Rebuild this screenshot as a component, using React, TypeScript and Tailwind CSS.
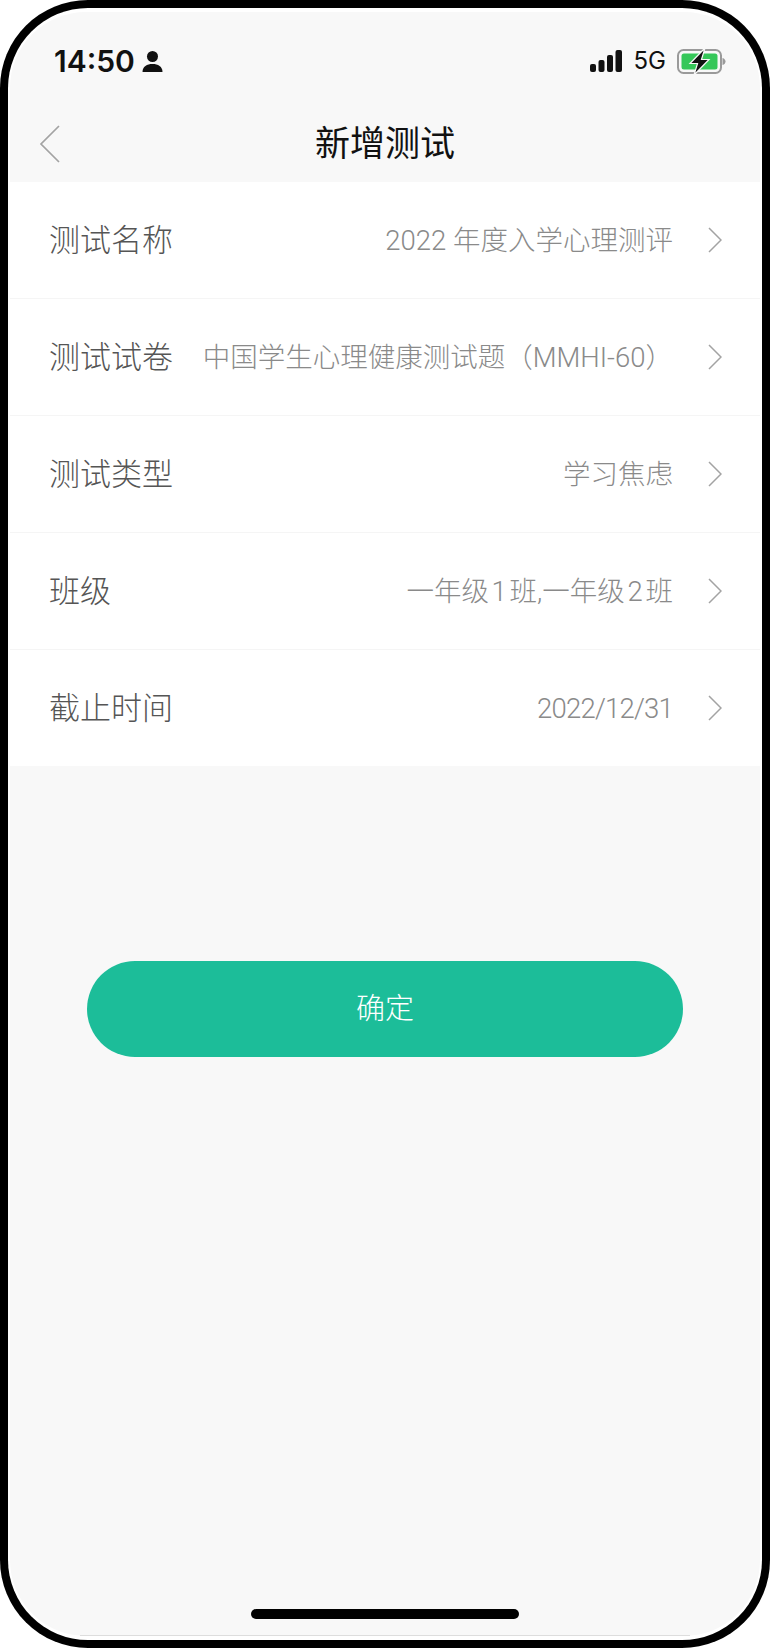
const CJK = "font-['Roboto','Noto_Sans_CJK_SC',sans-serif]";

const ROWS = [
  { label: "测试名称", value: "2022 年度入学心理测评", tweak: "" },
  { label: "测试试卷", value: "中国学生心理健康测试题（MMHI-60）", tweak: "" },
  { label: "测试类型", value: "学习焦虑", tweak: "" },
  { label: "班级", value: "一年级 1 班,一年级 2 班", tweak: "[word-spacing:-4px]" },
  { label: "截止时间", value: "2022/12/31", tweak: "tracking-[-0.8px]" },
];

function Chevron() {
  return (
    <svg width="16" height="26" viewBox="0 0 16 26" fill="none" className="shrink-0">
      <path d="M3 1L15 13L3 25" stroke="#a3a3a3" strokeWidth="1.5" />
    </svg>
  );
}

function StatusBar() {
  return (
    <div className="flex h-[88px] items-start justify-between pl-[44px] pr-[33px] pt-[31px]">
      <div className="flex items-center gap-[7px]">
        <span className="font-['Inter',sans-serif] text-[30px] leading-[36px] font-semibold text-[#111]">14:50</span>
        <svg width="21" height="21" viewBox="0 0 21 21" fill="#111">
          <circle cx="10.5" cy="5.5" r="5.5" />
          <path d="M0.5 21C0.5 15.5 5 13 10.5 13S20.5 15.5 20.5 21Z" />
        </svg>
      </div>
      <div className="flex items-center">
        <svg width="32" height="22" viewBox="0 0 32 22" fill="#111">
          <rect x="0" y="14" width="6" height="8" rx="2" />
          <rect x="8.5" y="10" width="6" height="12" rx="2" />
          <rect x="17" y="5" width="6" height="17" rx="2" />
          <rect x="25.5" y="0" width="6.5" height="22" rx="2" />
        </svg>
        <span className="ml-[12px] font-['Inter',sans-serif] text-[24px] leading-[36px] font-normal text-[#111]">5G</span>
        <svg width="50" height="30" viewBox="0 0 50 30" fill="none" className="ml-[11px]">
          <rect x="1" y="4" width="43" height="23" rx="5.500" stroke="#9a9a9a" strokeWidth="2" />
          <rect x="4.500" y="7.500" width="36" height="16" rx="2.500" fill="#35c759" />
          <path d="M45.500 12C47.500 12.500 48.500 14 48.500 15.500S47.500 18.500 45.500 19Z" fill="#9a9a9a" />
          <path d="M28 2L13 17.500H20.500L17 29L32 13.500H24.500Z" fill="#111" stroke="#f7f7f7" strokeWidth="1.200" />
        </svg>
      </div>
    </div>
  );
}

function NavBar() {
  return (
    <div className="grid h-[82px] grid-cols-[1fr_auto_1fr] items-center pt-[8px]">
      <svg width="24" height="40" viewBox="0 0 24 40" fill="none" className="mb-[2px] ml-[28px]">
        <path d="M21 2L3 20L21 38" stroke="#a3a3a3" strokeWidth="1.7" />
      </svg>
      <h1 className="text-[35px] leading-[44px] font-normal whitespace-nowrap text-[#111]">新增测试</h1>
    </div>
  );
}

export default function App() {
  return (
    <div className="h-[1650px] w-[770px] bg-white">
      <div className="h-[1648px] rounded-[88px] bg-black p-[8px]">
        <div className="h-full overflow-hidden rounded-[80px] bg-white px-[2px] py-[4px]">
          <div className={`${CJK} flex h-full flex-col rounded-[76px] bg-[#f8f8f8]`}>
            <StatusBar />
            <NavBar />

            <div className="bg-white">
              {ROWS.map((row, i) => (
                <div
                  key={row.label}
                  className={`flex h-[117px] items-center pl-[39px] pr-[38px] last:h-[116px] ${i < ROWS.length - 1 ? "border-b border-[#f5f5f5]" : ""}`}
                >
                  <span className="mt-[2px] shrink-0 text-[31px] leading-[40px] font-light text-[#555]">{row.label}</span>
                  <span className={`mt-[2px] ml-auto text-[27.5px] leading-[36px] font-light whitespace-nowrap text-[#8a8a8a] ${row.tweak}`}>{row.value}</span>
                  <span className="ml-[33px] flex">
                    <Chevron />
                  </span>
                </div>
              ))}
            </div>

            <button type="button" className="mx-[77px] mt-[195px] h-[96px] rounded-full bg-[#1cbd99] pt-[2px] text-[29px] font-light text-white">
              确定
            </button>

            <div className="mt-auto mb-[16px] h-[10px] w-[268px] self-center rounded-full bg-black" />
            <div className="mx-[70px] h-px bg-[#ddd]" />
          </div>
        </div>
      </div>
    </div>
  );
}
